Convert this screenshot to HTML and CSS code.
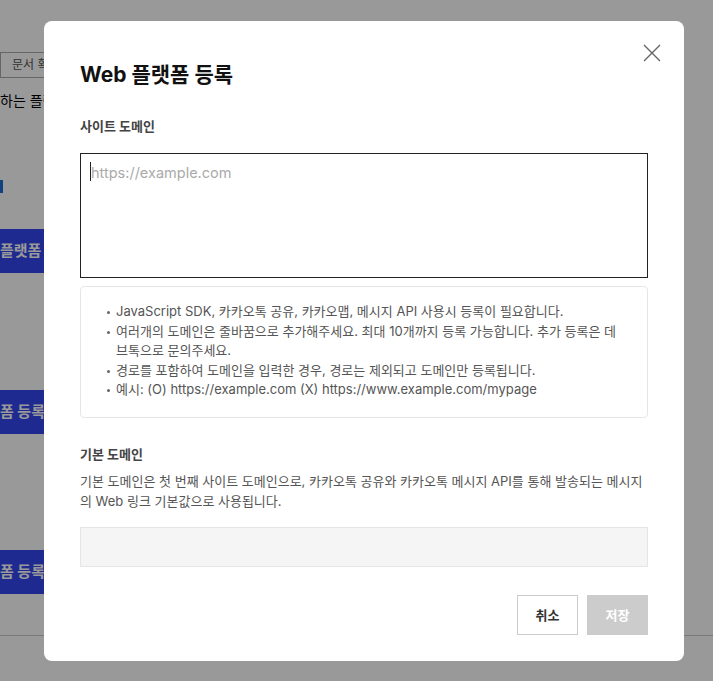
FILE: index.html
```html
<!DOCTYPE html>
<html lang="ko">
<head>
    <meta charset="UTF-8">
    <meta name="viewport" content="width=device-width, initial-scale=1.0">
    <title>Web 플랫폼 등록</title>
    <link rel="stylesheet" href="styles.css">
</head>
<body>

<div class="page">
    <div class="doc-btn">문서 확인</div>
    <p class="page-desc">하는 플랫폼</p>
    <div class="page-link"></div>
    <div class="platform-btn btn-first">플랫폼 등록</div>
    <div class="platform-btn btn-second">폼 등록</div>
    <div class="platform-btn btn-third">폼 등록</div>
    <div class="page-line"></div>
</div>

<div class="overlay">
    <div class="modal">
        <button class="close-btn" aria-label="닫기">
            <svg width="20" height="20" viewBox="0 0 20 20">
                <path d="M2 2 L18 18 M18 2 L2 18" stroke="#666" stroke-width="1.4" fill="none"/>
            </svg>
        </button>
        <h2 class="modal-title">Web 플랫폼 등록</h2>

        <div class="field-label">사이트 도메인</div>
        <div class="domain-input"><span class="caret"></span><span class="placeholder">https://example.com</span></div>

        <ul class="info-box">
            <li>JavaScript SDK, 카카오톡 공유, 카카오맵, 메시지 API 사용시 등록이 필요합니다.</li>
            <li>여러개의 도메인은 줄바꿈으로 추가해주세요. 최대 10개까지 등록 가능합니다. 추가 등록은 데브톡으로 문의주세요.</li>
            <li>경로를 포함하여 도메인을 입력한 경우, 경로는 제외되고 도메인만 등록됩니다.</li>
            <li>예시: (O) https://example.com (X) https://www.example.com/mypage</li>
        </ul>

        <div class="field-label label-default">기본 도메인</div>
        <p class="field-desc">기본 도메인은 첫 번째 사이트 도메인으로, 카카오톡 공유와 카카오톡 메시지 API를 통해 발송되는 메시지의 Web 링크 기본값으로 사용됩니다.</p>
        <div class="default-input"></div>

        <div class="modal-actions">
            <button class="btn-cancel">취소</button>
            <button class="btn-save">저장</button>
        </div>
    </div>
</div>

</body>
</html>
```

FILE: styles.css
```css
body {
    font-family: 'Inter', 'Noto Sans CJK KR', sans-serif;
    margin: 0;
    padding: 0;
    background-color: #fff;
    color: #333;
    overflow: hidden;
}
.page {
    height: 681px;
    display: flex;
    flex-direction: column;
    align-items: flex-start;
}
.doc-btn {
    margin-top: 52px;
    height: 24px;
    width: 80px;
    border: 1px solid #aaa;
    font-size: 12px;
    line-height: 24px;
    padding-left: 11px;
    color: #555;
}
.page-desc {
    margin: 12px 0 0;
    font-size: 14px;
    color: #000;
}
.page-link {
    margin-top: 70px;
    width: 3px;
    height: 13px;
    background-color: #1e6fd0;
}
.platform-btn {
    background-color: #3246f0;
    color: #fff;
    font-size: 15px;
    font-weight: bold;
    height: 44px;
    line-height: 44px;
    width: 120px;
    white-space: nowrap;
}
.btn-first {
    margin-top: 36px;
}
.btn-second {
    margin-top: 117px;
}
.btn-third {
    margin-top: 116px;
}
.page-line {
    margin-top: 41px;
    width: 100%;
    border-top: 1px solid #ccc;
}

.overlay {
    position: fixed;
    top: 0;
    left: 0;
    right: 0;
    bottom: 0;
    background-color: rgba(0, 0, 0, 0.4);
    padding: 21px 0 0 44px;
}
.modal {
    position: relative;
    box-sizing: border-box;
    width: 640px;
    height: 640px;
    background-color: #fff;
    border-radius: 8px;
    padding: 36px 36px 0;
}
.close-btn {
    position: absolute;
    top: 22px;
    right: 22px;
    background: none;
    border: none;
    padding: 0;
    cursor: pointer;
}
.close-btn svg {
    display: block;
}
.modal-title {
    margin: 0;
    font-size: 21px;
    font-weight: bold;
    color: #111;
    line-height: 36px;
}
.field-label {
    margin-top: 23px;
    font-size: 13px;
    font-weight: bold;
    color: #444;
    line-height: 20px;
}
.domain-input {
    margin-top: 17px;
    border: 1px solid #222;
    padding: 8px 9px;
    box-sizing: border-box;
    display: flex;
    align-items: flex-start;
    height: 125px;
}
.caret {
    width: 1px;
    height: 19px;
    background-color: #222;
}
.placeholder {
    font-size: 14.5px;
    color: #aaa;
    line-height: 20px;
    margin-top: 1px;
}
.info-box {
    margin: 8px 0 0;
    padding: 15px 20px 17px 35px;
    border: 1px solid #e5e5e5;
    border-radius: 4px;
    font-size: 13px;
    line-height: 19.6px;
    color: #555;
    list-style: none;
}
.info-box li {
    position: relative;
}
.info-box li::before {
    content: "";
    position: absolute;
    left: -9px;
    top: 9px;
    width: 3px;
    height: 3px;
    border-radius: 50%;
    background-color: #666;
}
.label-default {
    margin-top: 26px;
}
.field-desc {
    margin: 7px 0 0;
    font-size: 13px;
    line-height: 20px;
    color: #555;
}
.default-input {
    margin-top: 16px;
    height: 40px;
    box-sizing: border-box;
    border: 1px solid #e5e5e5;
    background-color: #f5f5f5;
}
.modal-actions {
    margin-top: 28px;
    display: flex;
    justify-content: flex-end;
    gap: 9px;
}
.modal-actions button {
    width: 61px;
    height: 40px;
    font-family: inherit;
    font-size: 13px;
    font-weight: 600;
    cursor: pointer;
}
.btn-cancel {
    background-color: #fff;
    border: 1px solid #ccc;
    color: #333;
}
.btn-save {
    background-color: #ccc;
    border: none;
    color: #fff;
}
```
